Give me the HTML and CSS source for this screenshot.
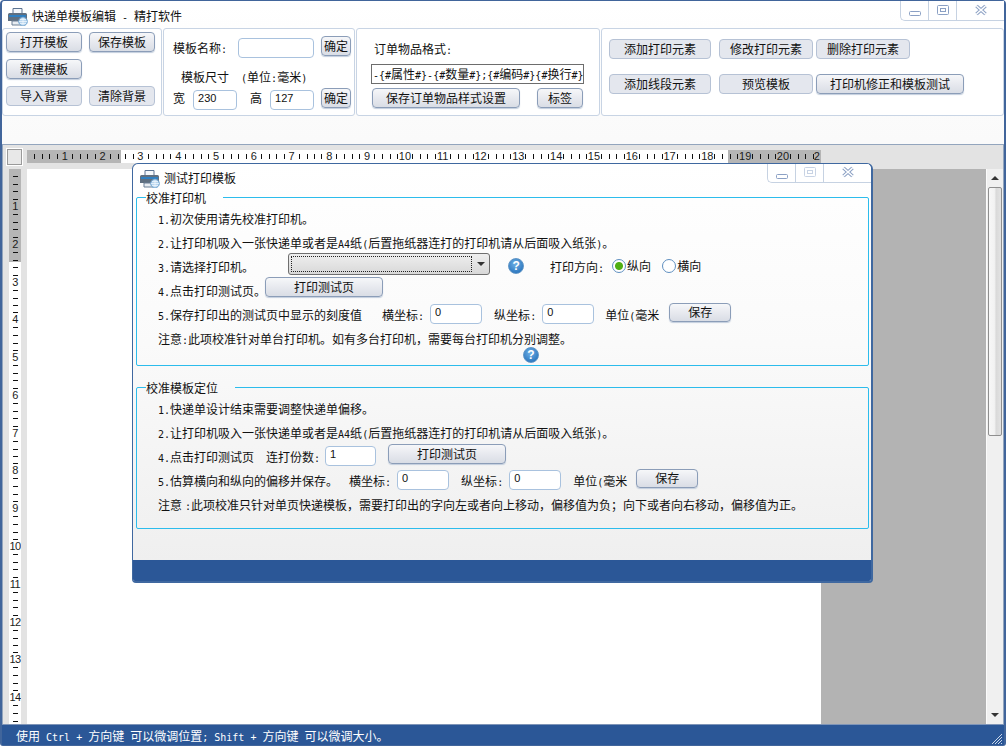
FILE: index.html
```html
<!DOCTYPE html>
<html lang="zh-CN">
<head>
<meta charset="utf-8">
<title>快递单模板编辑 - 精打软件</title>
<link rel="stylesheet" href="styles.css">
</head>
<body>
<svg class="defs" width="0" height="0" aria-hidden="true">
  <symbol id="printer" viewBox="0 0 20 18">
    <path d="M5 0.5h9v5H5z" fill="#f4f7fb" stroke="#5c7391"/>
    <path d="M1.5 5h16a1.5 1.5 0 0 1 1.5 1.5V13H0V6.500A1.500 1.500 0 0 1 1.500 5z" fill="#5f6f80"/>
    <path d="M1 7h17v2H1z" fill="#2f7fc1"/>
    <path d="M4 13h9v4H4z" fill="#e8edf2" stroke="#6b7f95" stroke-width="1"/>
    <circle cx="15" cy="13.500" r="4.300" fill="#b9d6ef" stroke="#6fa3cf"/>
    <path d="M15 9.500v8M11 13.500h8M12 11.500h6M12 15.500h6" stroke="#f4f9fd" stroke-width=".7" fill="none"/>
  </symbol>
  <symbol id="ic-min" viewBox="0 0 14 8"><rect x="1.500" y="2.500" width="11" height="4" rx="1" fill="#fff" stroke="#8ba0c4"/></symbol>
  <symbol id="ic-max" viewBox="0 0 14 12"><rect x="1.500" y="1.500" width="11" height="9" rx="1" fill="none" stroke="currentColor"/><rect x="4.500" y="4.500" width="5" height="3" fill="none" stroke="currentColor"/></symbol>
  <symbol id="ic-close" viewBox="0 0 14 12"><path d="M2.500 2l9 8M11.500 2l-9 8" stroke="#8ba0c4" stroke-width="3.600" fill="none"/><path d="M2.500 2l9 8M11.500 2l-9 8" stroke="#fff" stroke-width="1.600" fill="none"/></symbol>
</svg>

<div class="app">
  <header class="titlebar">
    <svg class="title-icon"><use href="#printer"/></svg>
    <span class="title-text">快递单模板编辑<span class="lat">&nbsp;-&nbsp;</span>精打软件</span>
    <div class="win-ctl">
      <span class="wc wc-s"><svg class="ic-min"><use href="#ic-min"/></svg></span>
      <span class="wc wc-s"><svg class="ic-max"><use href="#ic-max"/></svg></span>
      <span class="wc wc-l"><svg class="ic-close"><use href="#ic-close"/></svg></span>
    </div>
  </header>

  <section class="toolbar">
    <div class="panel p1">
      <button class="btn">打开模板</button>
      <button class="btn">保存模板</button>
      <button class="btn">新建模板</button>
      <span></span>
      <button class="btn flat">导入背景</button>
      <button class="btn flat">清除背景</button>
    </div>
    <div class="panel p2">
      <div class="p2-r1">
        <span class="w65 lbl-down">模板名称<span class="lat">:</span></span>
        <input class="field w76" value="">
        <button class="btn ok">确定</button>
      </div>
      <div class="p2-r2">模板尺寸<span class="lat">&nbsp;&nbsp;(</span>单位<span class="lat">:</span>毫米<span class="lat">)</span></div>
      <div class="p2-r3">
        <span class="up2">宽</span>
        <input class="field w44 ml8" value="230">
        <span class="ml13 up2">高</span>
        <input class="field w44 ml8" value="127">
        <button class="btn ok ml7">确定</button>
      </div>
    </div>
    <div class="panel p3">
      <div class="p3-label">订单物品格式<span class="lat">:</span></div>
      <div class="fmt"><span class="lat">-{#</span>属性<span class="lat">#}-{#</span>数量<span class="lat">#};{#</span>编码<span class="lat">#}{#</span>换行<span class="lat">#}</span></div>
      <div class="p3-btns">
        <button class="btn w148">保存订单物品样式设置</button>
        <button class="btn w46">标签</button>
      </div>
    </div>
    <div class="panel p4">
      <div class="p4-row">
        <button class="btn flat w102">添加打印元素</button>
        <button class="btn flat w94 ml8">修改打印元素</button>
        <button class="btn flat w94 ml3">删除打印元素</button>
      </div>
      <div class="p4-row">
        <button class="btn flat w102">添加线段元素</button>
        <button class="btn flat w94 ml8">预览模板</button>
        <button class="btn w148 ml3">打印机修正和模板测试</button>
      </div>
    </div>
  </section>

  <main class="workspace">
    <div class="corner"><span class="corner-box"></span></div>
    <div class="ruler-h">
      <span class="rc"></span><span class="rc">1</span><span class="rc">2</span><span class="rc">3</span><span class="rc">4</span><span class="rc">5</span><span class="rc">6</span><span class="rc">7</span><span class="rc">8</span><span class="rc">9</span><span class="rc">10</span><span class="rc">11</span><span class="rc">12</span><span class="rc">13</span><span class="rc">14</span><span class="rc">15</span><span class="rc">16</span><span class="rc">17</span><span class="rc">18</span><span class="rc">19</span><span class="rc">20</span><span class="rc rc-end">2</span>
    </div>
    <div class="ruler-v">
      <span class="rv"></span><span class="rv">1</span><span class="rv">2</span><span class="rv">3</span><span class="rv">4</span><span class="rv">5</span><span class="rv">6</span><span class="rv">7</span><span class="rv">8</span><span class="rv">9</span><span class="rv">10</span><span class="rv">11</span><span class="rv">12</span><span class="rv">13</span><span class="rv">14</span><span class="rv"></span>
    </div>
    <div class="stage">
      <div class="page"></div>
      <div class="off"></div>
      <div class="scrollbar">
        <span class="sb-btn"><i class="arrow-up"></i></span>
        <span class="sb-thumb"></span>
        <span class="sb-track"></span>
        <span class="sb-btn"><i class="arrow-down"></i></span>
      </div>
    </div>
  </main>

  <footer class="statusbar">
    <span class="status-text">使用<span class="lat">&nbsp;Ctrl&nbsp;+&nbsp;</span>方向键<span class="lat">&nbsp;</span>可以微调位置<span class="lat">;&nbsp;Shift&nbsp;+&nbsp;</span>方向键<span class="lat">&nbsp;</span>可以微调大小。</span>
    <svg class="grip" viewBox="0 0 12 12" width="12" height="12"><path d="M11 1L1 11M11 4L4 11M11 7L7 11M11 10L10 11" stroke="#c9d6e8" fill="none"/></svg>
  </footer>

  <div class="dialog">
    <div class="dlg-title">
      <svg class="dlg-icon"><use href="#printer"/></svg>
      <span class="dlg-name">测试打印模板</span>
      <div class="win-ctl dlg-ctl">
        <span class="wc wc-s"><svg class="ic-min"><use href="#ic-min"/></svg></span>
        <span class="wc wc-s dis"><svg class="ic-max"><use href="#ic-max"/></svg></span>
        <span class="wc wc-l"><svg class="ic-close"><use href="#ic-close"/></svg></span>
      </div>
    </div>

    <fieldset class="group g1">
      <legend>校准打印机</legend>
      <div class="row"><span><span class="lat">1.</span>初次使用请先校准打印机。</span></div>
      <div class="row"><span><span class="lat">2.</span>让打印机吸入一张快递单或者是<span class="lat">A4</span>纸<span class="lat">(</span>后置拖纸器连打的打印机请从后面吸入纸张<span class="lat">)</span>。</span></div>
      <div class="row">
        <span><span class="lat">3.</span>请选择打印机。</span>
        <div class="combo ml34 up6"><span class="combo-in"></span><i class="arrow-down combo-arrow"></i></div>
        <span class="help ml18 up2">?</span>
        <span class="ml26">打印方向<span class="lat">:</span></span>
        <label class="radio ml8 up2"><input type="radio" name="dir" checked>纵向</label>
        <label class="radio ml11 up2"><input type="radio" name="dir">横向</label>
      </div>
      <div class="row">
        <span><span class="lat">4.</span>点击打印测试页。</span>
        <button class="btn w118 ml-1 up8">打印测试页</button>
      </div>
      <div class="row">
        <span><span class="lat">5.</span>保存打印出的测试页中显示的刻度值</span>
        <span class="ml20">横坐标<span class="lat">:</span></span>
        <input class="field w52 ml6 up2" value="0">
        <span class="ml12">纵坐标<span class="lat">:</span></span>
        <input class="field w52 ml6 up2" value="0">
        <span class="ml11">单位<span class="lat">(</span>毫米</span>
        <button class="btn w62 ml10 up6">保存</button>
      </div>
      <div class="row"><span>注意<span class="lat">:</span>此项校准针对单台打印机。如有多台打印机，需要每台打印机分别调整。</span></div>
      <div class="help-row"><span class="help">?</span></div>
    </fieldset>

    <fieldset class="group g2">
      <legend>校准模板定位</legend>
      <div class="row"><span><span class="lat">1.</span>快递单设计结束需要调整快递单偏移。</span></div>
      <div class="row"><span><span class="lat">2.</span>让打印机吸入一张快递单或者是<span class="lat">A4</span>纸<span class="lat">(</span>后置拖纸器连打的打印机请从后面吸入纸张<span class="lat">)</span>。</span></div>
      <div class="row">
        <span><span class="lat">4.</span>点击打印测试页</span>
        <span class="ml12">连打份数<span class="lat">:</span></span>
        <input class="field w51 ml5 up2" value="1">
        <button class="btn w118 ml12 up6">打印测试页</button>
      </div>
      <div class="row">
        <span><span class="lat">5.</span>估算横向和纵向的偏移并保存。</span>
        <span class="ml11">横坐标<span class="lat">:</span></span>
        <input class="field w52 ml6 up2" value="0">
        <span class="ml12">纵坐标<span class="lat">:</span></span>
        <input class="field w52 ml6 up2" value="0">
        <span class="ml12">单位<span class="lat">(</span>毫米</span>
        <button class="btn w62 ml9 up6">保存</button>
      </div>
      <div class="row"><span>注意<span class="lat wide-colon">:</span>此项校准只针对单页快递模板，需要打印出的字向左或者向上移动，偏移值为负；向下或者向右移动，偏移值为正。</span></div>
    </fieldset>

    <div class="dlg-foot"></div>
  </div>
</div>
</body>
</html>
```
FILE: styles.css
```css
* { box-sizing: border-box; }
html, body { margin: 0; padding: 0; }
body {
  width: 1006px;
  height: 746px;
  overflow: hidden;
  font: 12px/16px "Noto Sans CJK SC", "Liberation Sans", sans-serif;
  color: #111;
  background: #fff;
}
.defs { position: absolute; }
.lat { font-family: "DejaVu Sans Mono", monospace; font-size: 10px; line-height: 1; }

/* window */
.app {
  position: relative;
  width: 1006px;
  height: 746px;
  display: flex;
  flex-direction: column;
  border: solid #41659b;
  border-width: 1px 2px;
  border-radius: 4px 4px 3px 3px;
  background: linear-gradient(#fff, #fafafa 140px);
}
.titlebar {
  flex: 0 0 27px;
  display: flex;
  align-items: flex-start;
}
.title-icon { width: 20px; height: 18px; margin: 7px 0 0 6px; }
.title-text { margin: 7px 0 0 4px; }
.win-ctl {
  margin-left: auto;
  display: flex;
  height: 20px;
  background: #fff;
  border: solid #c6d2e2;
  border-width: 0 0 1px 1px;
  border-radius: 0 0 0 5px;
}
.wc { display: flex; align-items: center; justify-content: center; color: #8ba0c4; }
.wc-s { width: 28px; border-right: 1px solid #c6d2e2; }
.wc-l { width: 47px; }
.wc.dis { color: #c8d3e4; }
.ic-min { width: 14px; height: 8px; margin-top: 5px; }
.ic-max { width: 14px; height: 12px; margin-top: -2px; }
.ic-close { width: 14px; height: 12px; margin-top: -2px; }

/* toolbar */
.toolbar {
  flex: 0 0 88px;
  display: flex;
  gap: 1px;
  margin-bottom: 28px;
}
.panel {
  border: 1px solid #c8d4e4;
  border-radius: 3px;
  background: #fff;
}
.p1 {
  width: 160px;
  padding: 3px;
  display: grid;
  grid-template-columns: 76px 66px;
  grid-auto-rows: 20px;
  column-gap: 7px;
  row-gap: 7px;
}
.p2 { width: 192px; padding: 7px 0 0 9px; }
.p2-r1 { display: flex; align-items: center; height: 22px; }
.p2-r2 { height: 30px; padding: 11px 0 0 8px; }
.p2-r3 { display: flex; align-items: center; height: 22px; }
.p2 .field { align-self: flex-end; }
.p2 .ok { align-self: flex-start; }
.lbl-down { margin-top: 2px; }
.w65 { width: 65px; }
.p3 { width: 244px; padding: 11px 0 0 14px; }
.p3-label { height: 18px; margin: 0 0 6px 3px; line-height: 18px; }
.fmt {
  width: 213px;
  height: 20px;
  padding-left: 1px;
  border: 1px solid #6d6d6d;
  background: #fff;
  line-height: 18px;
  white-space: nowrap;
  overflow: hidden;
}
.p3-btns { display: flex; gap: 17px; margin: 4px 0 0 1px; }
.p4 { flex: 1; padding: 10px 0 0 7px; }
.p4-row { display: flex; margin-bottom: 15px; }

/* controls */
.btn {
  height: 20px;
  padding: 0;
  font: inherit;
  color: #111;
  border: 1px solid #8b9db8;
  border-radius: 4px;
  background: linear-gradient(#f6f7f9, #e6e8ee 55%, #d9dde5);
  box-shadow: 0 1px 1px #c3cedd;
}
.btn.flat {
  background: #e4e7ee;
  border-color: #b6c2d5;
  box-shadow: none;
}
.ok { width: 30px; }
.field {
  height: 20px;
  padding: 0 0 4px 4px;
  font: 11px/14px "Liberation Sans", sans-serif;
  color: #111;
  border: 1px solid #a9c2de;
  border-radius: 4px;
  background: #fff;
  outline: none;
}
.w44 { width: 44px; }
.w46 { width: 46px; }
.w51 { width: 51px; }
.w52 { width: 52px; }
.w62 { width: 62px; height: 19px; }
.w76 { width: 76px; margin-right: 7px; }
.w94 { width: 94px; }
.w102 { width: 102px; }
.w118 { width: 118px; }
.w148 { width: 148px; }
.ml-1 { margin-left: -1px; }
.ml3 { margin-left: 3px; }
.ml5 { margin-left: 5px; }
.ml6 { margin-left: 6px; }
.ml7 { margin-left: 7px; }
.ml8 { margin-left: 8px; }
.ml9 { margin-left: 9px; }
.ml10 { margin-left: 10px; }
.ml11 { margin-left: 11px; }
.ml12 { margin-left: 12px; }
.ml13 { margin-left: 13px; }
.ml18 { margin-left: 18px; }
.ml20 { margin-left: 20px; }
.ml26 { margin-left: 26px; }
.ml34 { margin-left: 34px; }
.up2 { margin-bottom: 2px; }
.up6 { margin-bottom: 6px; }
.up8 { margin-bottom: 8px; }

/* workspace */
.workspace {
  flex: 1;
  min-height: 0;
  display: grid;
  grid-template-columns: 24px 1fr;
  grid-template-rows: 24px 1fr;
  background: #e3e3e3;
  border: solid #93a5bd;
  border-width: 1px 1px 0;
}
.corner { padding: 4px 0 0 4px; }
.corner-box {
  display: block;
  width: 15px;
  height: 16px;
  background: #e8e8e8;
  border: 1px solid #9a9a9a;
  box-shadow: 0 0 0 1px #fff;
}
.ruler-h {
  width: 794px;
  height: 13px;
  margin-top: 5px;
  display: flex;
  overflow: hidden;
  background: linear-gradient(90deg, #b5b5b5 94px, #fff 94px, #fff 701px, #b5b5b5 701px);
}
.rc {
  flex: 0 0 37.8px;
  text-align: center;
  font: 11px/13px "Liberation Sans", sans-serif;
  color: #1b1b1b;
  background:
    linear-gradient(#111, #111) 3.5px 4px / 1px 5px no-repeat,
    linear-gradient(#111, #111) 11px 4px / 1px 5px no-repeat,
    linear-gradient(#111, #111) 26px 4px / 1px 5px no-repeat,
    linear-gradient(#111, #111) 34px 4px / 1px 5px no-repeat;
}
.rc:first-child { margin-left: -18.9px; }
.rc-end { text-align: left; padding-left: 12px; }
.ruler-v {
  width: 12px;
  margin-left: 6px;
  display: flex;
  flex-direction: column;
  overflow: hidden;
  background: linear-gradient(#b5b5b5 93px, #fff 93px);
}
.rv {
  flex: 0 0 37.8px;
  line-height: 37.8px;
  text-align: center;
  font-family: "Liberation Sans", sans-serif;
  font-size: 11px;
  letter-spacing: -.5px;
  color: #1b1b1b;
  background:
    linear-gradient(#111, #111) 4px 3.5px / 5px 1px no-repeat,
    linear-gradient(#111, #111) 4px 11px / 5px 1px no-repeat,
    linear-gradient(#111, #111) 4px 26px / 5px 1px no-repeat,
    linear-gradient(#111, #111) 4px 34px / 5px 1px no-repeat;
}
.rv:first-child { margin-top: -18.9px; }
.stage { display: flex; min-height: 0; }
.page { width: 794px; background: #fff; }
.off { flex: 1; background: #b3b3b3; }
.scrollbar {
  flex: 0 0 17px;
  display: flex;
  flex-direction: column;
  background: #f0f0f0;
  border-left: 1px solid #fbfbfb;
}
.sb-btn { flex: 0 0 18px; display: flex; align-items: center; justify-content: center; }
.sb-thumb {
  flex: 0 0 249px;
  margin: 0 1px 0 1px;
  border: 1px solid #8f8f8f;
  border-radius: 2px;
  background: linear-gradient(90deg, #f7f7f7, #f2f2f2 45%, #d9d9d9 60%, #e3e3e3);
}
.sb-track { flex: 1; }
.arrow-up, .arrow-down {
  display: block;
  width: 0;
  height: 0;
  border-left: 4px solid transparent;
  border-right: 4px solid transparent;
}
.arrow-up { border-bottom: 4px solid #333; }
.arrow-down { border-top: 4px solid #333; }

/* status */
.statusbar {
  flex: 0 0 21px;
  display: flex;
  align-items: center;
  justify-content: space-between;
  padding: 1px 1px 0 14px;
  color: #fff;
  background: #2b5797;
  border-top: 1px solid #7f95b8;
}
.status-text { white-space: nowrap; }
.grip { align-self: flex-end; }

/* dialog */
.dialog {
  position: absolute;
  left: 130px;
  top: 162px;
  width: 741px;
  height: 420px;
  display: flex;
  flex-direction: column;
  border: 1px solid #3f68a0;
  border-width: 1px 2px 2px 1px;
  border-radius: 6px 6px 4px 4px;
  background: linear-gradient(#fff, #fafafa 180px, #eeeeee);
  overflow: hidden;
}
.dlg-title { flex: 0 0 25px; display: flex; align-items: flex-start; }
.dlg-icon { width: 20px; height: 18px; margin: 6px 0 0 7px; }
.dlg-name { margin: 6px 0 0 4px; }
.dlg-ctl { height: 19px; }
.group {
  margin: 0 2px 0 3px;
  padding: 2px 0 0 21px;
  min-width: 0;
  border: 1px solid #2cbcec;
  border-radius: 2px;
}
.group legend {
  margin-left: -12px;
  padding: 2px 17px 0 0;
  line-height: 14px;
}
.g1 { height: 177px; }
.g2 { height: 150px; margin-top: 13px; }
.row {
  height: 24px;
  display: flex;
  align-items: center;
  white-space: nowrap;
}
.wide-colon { margin-left: 3px; }
.combo {
  position: relative;
  width: 202px;
  height: 22px;
  padding: 2px;
  border: 1px solid #6f6f6f;
  border-radius: 3px;
  background: linear-gradient(#efefef, #d8d8d8);
}
.combo-in {
  display: block;
  width: 181px;
  height: 16px;
  border: 1px dotted #222;
}
.combo-arrow { position: absolute; right: 4px; top: 8px; }
.help {
  display: inline-flex;
  align-items: center;
  justify-content: center;
  width: 16px;
  height: 16px;
  border-radius: 50%;
  font: bold 12px/16px "Liberation Sans", sans-serif;
  color: #fff;
  border: 1px solid #5f95c6;
  background: radial-gradient(circle at 45% 35%, #6fb0e6, #2f79c0 75%);
}
.help-row { margin: -4px 0 0 365px; height: 16px; display: flex; }
.radio { display: flex; align-items: center; gap: 1px; }
.radio input {
  appearance: none;
  width: 14px;
  height: 14px;
  margin: 0;
  border: 1px solid #5f8fc0;
  border-radius: 50%;
  background: #fff;
}
.radio input:checked {
  background: radial-gradient(circle, #4fae12 0 3.500px, #fff 4.500px);
}
.dlg-foot {
  margin-top: auto;
  flex: 0 0 21px;
  background: #2b5797;
}
```
